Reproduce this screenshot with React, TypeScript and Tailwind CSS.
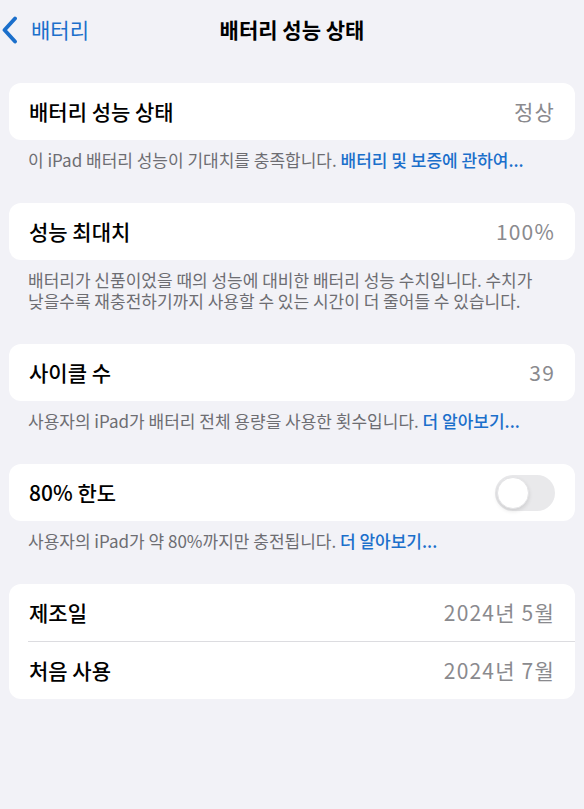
import React from "react"

const font = { fontFamily: '"Noto Sans CJK KR", "Noto Sans", sans-serif' }

function Row({ label, value, children }: { label: string; value?: string; children?: React.ReactNode }) {
  return (
    <div className="flex h-[57px] items-center justify-between pl-[20px] pr-[20px]">
      <span className="text-[21px] font-medium text-black">{label}</span>
      {value && <span className="text-[21px] tracking-[1.2px] text-[#8a8a8e]">{value}</span>}
      {children}
    </div>
  )
}

function Card({ children }: { children: React.ReactNode }) {
  return <div className="mx-[9px] overflow-hidden rounded-[12px] bg-white">{children}</div>
}

function Footer({ children }: { children: React.ReactNode }) {
  return <p className="break-keep px-[28px] pt-[9px] pb-[33px] text-[17px] leading-[21px] text-[#6d6d72]">{children}</p>
}

function Link({ children }: { children: React.ReactNode }) {
  return <span className="font-medium text-[#1b6fcb]">{children}</span>
}

export default function App() {
  return (
    <div className="min-h-[809px] w-[584px] bg-[#f2f2f7]" style={font}>
      <div className="relative flex h-[60px] items-center">
        <div className="flex items-center gap-[13px] pl-[1px] text-[#1b6fcb]">
          <svg width="17" height="28" viewBox="0 0 17 28" fill="none">
            <path d="M14 2.5 L3.5 14 L14 25.5" stroke="currentColor" strokeWidth="3.8" strokeLinecap="round" strokeLinejoin="round" />
          </svg>
          <span className="text-[21px]">배터리</span>
        </div>
        <div className="pointer-events-none absolute inset-x-0 text-center text-[21px] font-bold text-black">배터리 성능 상태</div>
      </div>

      <div className="pt-[23px]">
        <Card>
          <Row label="배터리 성능 상태" value="정상" />
        </Card>
        <Footer>
          이 iPad 배터리 성능이 기대치를 충족합니다. <Link>배터리 및 보증에 관하여...</Link>
        </Footer>

        <Card>
          <Row label="성능 최대치" value="100%" />
        </Card>
        <Footer>
          배터리가 신품이었을 때의 성능에 대비한 배터리 성능 수치입니다. 수치가 낮을수록 재충전하기까지 사용할 수 있는 시간이 더 줄어들 수 있습니다.
        </Footer>

        <Card>
          <Row label="사이클 수" value="39" />
        </Card>
        <Footer>
          사용자의 iPad가 배터리 전체 용량을 사용한 횟수입니다. <Link>더 알아보기...</Link>
        </Footer>

        <Card>
          <Row label="80% 한도">
            <div className="flex h-[36px] w-[60px] items-center rounded-full bg-[#e9e9eb] p-[2px]">
              <div className="h-[32px] w-[32px] rounded-full border border-[#e4e4e6] bg-white shadow-[0_2px_4px_rgba(0,0,0,0.12)]" />
            </div>
          </Row>
        </Card>
        <Footer>
          사용자의 iPad가 약 80%까지만 충전됩니다. <Link>더 알아보기...</Link>
        </Footer>

        <Card>
          <Row label="제조일" value="2024년 5월" />
          <div className="ml-[19px] h-px bg-[#dcdce0]" />
          <Row label="처음 사용" value="2024년 7월" />
        </Card>
      </div>
    </div>
  )
}
